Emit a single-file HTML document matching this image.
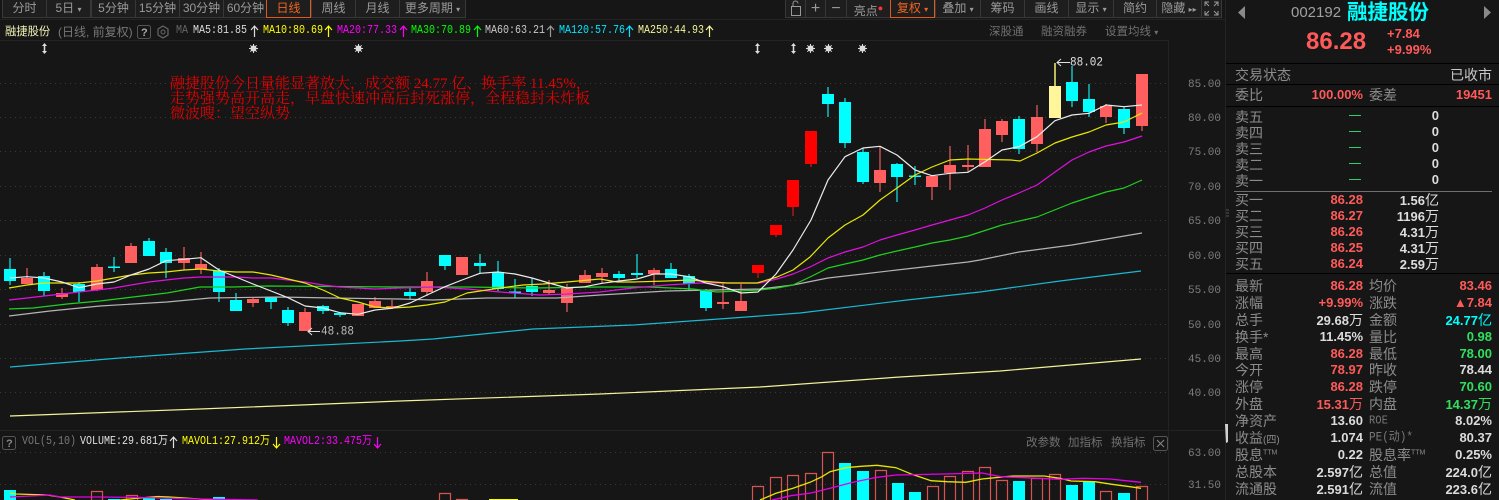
<!DOCTYPE html>
<html lang="zh"><head><meta charset="utf-8"><title>融捷股份</title>
<style>
html,body{margin:0;padding:0;background:#161616;}
#p{position:relative;width:1499px;height:500px;overflow:hidden;background:#161616;font-family:"Liberation Sans","Noto Sans CJK SC",sans-serif;font-size:12px;color:#999;}
.t{position:absolute;white-space:nowrap;line-height:16px;}
.m{font-family:"Liberation Mono","Noto Sans CJK SC",monospace;font-size:10px;transform:scaleY(1.15);}
.g{color:#8a8a8a}
.l{font-size:14px;color:#8c8c8c;left:1235px;}
.l2{font-size:14px;color:#8c8c8c;left:1369px;}
.v{font-size:13px;font-weight:bold;right:136px;}
.w{font-size:13px;font-weight:bold;right:7px;}
.q{font-size:13px;font-weight:bold;right:60px;color:#ddd;}
.r{color:#ff5a5a}.n{color:#2fe05f}.c{color:#00ffff}.h{color:#dcdcdc}
.b{position:absolute;top:0;height:17px;line-height:17px;text-align:center;background:#1e1e1e;border:1px solid #383838;border-top:0;box-sizing:content-box;color:#9a9a9a;font-size:12px;}
.ax{font-family:"Liberation Mono",monospace;font-size:11px;color:#7d7d7d;left:1188px;}
svg{position:absolute;left:0;top:0}
</style></head><body><div id="p">

<svg width="1499" height="500" viewBox="0 0 1499 500" fill="none">
<!-- frames -->
<path d="M0 40.5H1168M0 430.5H1225M1168.5 40V500M1225.5 0V500" stroke="#232323"/>
<path d="M0 19.5H1225" stroke="#232323"/>
<path d="M1226 63.5H1499M1226 84.5H1499M1226 106.5H1499M1226 273.5H1499" stroke="#000"/>
<path d="M1234 191.5H1492" stroke="#6e6e6e"/>
<!-- grid -->
<path d="M0 83.5H1168M0 117.5H1168M0 151.5H1168M0 186.5H1168M0 220.5H1168M0 255.5H1168M0 289.5H1168M0 324.5H1168M0 358.5H1168M0 392.5H1168M0 452.5H1168M0 484.5H1168" stroke="#383838" stroke-dasharray="1 4"/>

<!-- volume bars -->
<g stroke="#d9534f" stroke-width="1.2">
<path d="M91.5 491.5h11v9h-11zM126.5 495.5h11v6h-11zM439.5 493.5h11v8h-11zM456.5 499.5h11v2h-11zM752.5 486.5h11v15h-11zM770.5 477.5h11v24h-11zM787.5 475.5h11v26h-11zM805.5 473.5h11v28h-11zM822.5 452.5h11v49h-11zM875.5 470.5h11v31h-11zM927.5 486.5h11v15h-11zM944.5 476.5h11v25h-11zM962.5 471.5h11v30h-11zM979.5 467.5h11v34h-11zM996.5 480.5h11v21h-11zM1031.5 478.5h11v23h-11zM1049.5 474.5h11v27h-11zM1100.5 491.5h11v10h-11zM1136.5 486.5h11v15h-11z"/>
</g>
<path d="M4 490h12v10H4zM108 499h12v1h-12zM143 498h12v2h-12zM160 499h12v1h-12zM213 497h12v3h-12zM839 463h12v37h-12zM857 471h12v29h-12zM892 483h12v17h-12zM909 492h12v8h-12zM1013 481h12v19h-12zM1066 485h12v15h-12zM1083 482h12v18h-12zM1118 493h12v7h-12z" fill="#00ffff"/>
<path d="M489 499h29v1h-29z" fill="#ffff00"/>
<g stroke-width="1.3">
<polyline stroke="#e6e600" points="10,493 16,494 47,495 60,497 75,500"/>
<polyline stroke="#e6e600" points="120,500 140,498 158,496.5 170,497 192,498.5 215,500"/>
<polyline stroke="#e6e600" points="760,500 776,493.3 793,488.3 810,482.3 822,476.7 830,471.7 846,467.7 861,466.3 877,465.3 896,467.7 912,474.3 931,480.7 947,481.7 966,482.3 982,479 999,477.3 1013,476 1044,476 1060,478.3 1071,481 1095,481.7 1112,484.3 1130,486.7 1141,488.3"/>
<polyline stroke="#e600e6" points="10,497 50,495 60,497 100,497 140,497.5 200,499 258,500"/>
<polyline stroke="#e600e6" points="772,500 791,495.7 811,493 830,488.3 853,482.3 877,477.3 896,475 943,474 982,473 1001,476.7 1025,477.7 1060,479.3 1083,478.3 1110,479 1141,482.3"/>
</g>

<!-- candles wicks -->
<g stroke-width="1.6" stroke-linecap="butt">
<path stroke="#14b4b4" d="M10 258V285M44 272V296M79 282V302M114 257V272M149 238V256M166 248V278M219 268V302M236 293V311M271 297V309M288 307V326M323 305V314M340 312V317M410 287V300M445 255V270M480 254V273M498 261V291M515 279V298M532 278V296M619 271V282M637 254V278M671 263V278M689 274V290M706 289V311M828 87V117M845 98V148M863 148V184M897 163V202M915 166V185M1019 116V154M1072 66V107M1089 84V117M1124 107V134"/>
<path stroke="#b84c4c" d="M27 268V284M62 288V299M97 264V291M131 243V263M184 247V270M201 252V274M253 297V307M305 308V331M375 297V308M392 300V309M427 272V296M549 280V294M567 284V312M585 270V283M602 268V283M654 268V285M723 282V309M741 284V311M880 147V192M932 175V200M950 146V190M968 145V172M985 119V167M1002 119V142M1037 105V152M1106 104V123M1142 74V131"/>
<path stroke="#a81818" d="M758 273V278M776 235V237M793 207V216M811 164V167"/>
<path stroke="#e8e070" d="M1055 63V86"/>
</g>
<!-- candle bodies -->
<path fill="#00ffff" d="M4 269h12v12H4zM38 276h12v15H38zM73 284h12v8H73zM108 266.500h12v1.500h-12zM143 241h12v15h-12zM160 252h12v11h-12zM213 271h12v21h-12zM230 300h12v11h-12zM265 297h12v5h-12zM282 310h12v13h-12zM317 306h12v5h-12zM334 313h12v2h-12zM404 292h12v4h-12zM439 255h12v11h-12zM474 263h12v3h-12zM492 272h12v17h-12zM509 291.500h12v1.500h-12zM526 286h12v6h-12zM613 274h12v4h-12zM631 273h12v2h-12zM665 269h12v9h-12zM683 276h12v8h-12zM700 291h12v17h-12zM822 94h12v10h-12zM839 102h12v41h-12zM857 152h12v30h-12zM891 164h12v13h-12zM909 175.500h12v1.500h-12zM1013 119h12v30h-12zM1066 82h12v19h-12zM1083 99h12v13h-12zM1118 109h12v19h-12z"/>
<path fill="#ff5f5f" d="M21 278h12v6H21zM56 293h12v4H56zM91 267h12v23H91zM125 246h12v17h-12zM178 258h12v5h-12zM195 264h12v5h-12zM247 299h12v4h-12zM299 312h12v19h-12zM352 304h12v12h-12zM369 301h12v7h-12zM386 306h12v2h-12zM421 281h12v11h-12zM456 257h12v18h-12zM543 290h12v3h-12zM561 288h12v15h-12zM579 275h12v8h-12zM596 273h12v4h-12zM648 270h12v4h-12zM717 302h12v2h-12zM735 301h12v10h-12zM874 170h12v13h-12zM926 176h12v11h-12zM944 165h12v8h-12zM962 165h12v2h-12zM979 129h12v38h-12zM996 121h12v14h-12zM1031 117h12v27h-12zM1100 106h12v11h-12zM1136 74h12v52h-12z"/>
<path fill="#ff0000" d="M752 265h12v8h-12zM770 225h12v10h-12zM787 180h12v27h-12zM805 131h12v33h-12z"/>
<path fill="#fff59a" d="M1049 86h12v32h-12z"/>

<!-- MA lines -->
<g stroke-width="1.2" stroke-linejoin="round">
<polyline stroke="#f3f39a" points="10,416 200,409 400,401 600,394 760,387 900,377 1000,371 1141,359"/>
<polyline stroke="#19b9d2" points="10,367 120,358 245,349 400,341 433,339 533,329 633,325 733,318 800,313 907,300 980,292 1060,281 1141,271"/>
<polyline stroke="#b4b4b4" points="9,316 50,311 100,306 167,302 210,298 277,297 333,298 400,299 433,300 487,298 557,298 600,295 667,291 713,290 760,289 777,287 793,285 828,278 863,274 897,270 932,266 968,262 980,260 1019,252 1072,245 1142,233"/>
<polyline stroke="#1fd01f" points="9,309 33,308 67,304 100,301 133,297 167,293 200,287 233,287 267,286 400,287 467,287 533,288 600,287 650,287 693,289 717,292 760,290 777,288 793,285 810,277 828,268 845,264 863,260 880,255 897,251 915,247 932,243 950,240 968,236 1002,225 1037,217 1072,203 1106,192 1124,188 1142,180"/>
<polyline stroke="#e010e0" points="9,300 27,298 44,296 62,294 79,292 97,290 114,288 131,285 149,282 166,280 184,278 201,277 219,277 236,277 253,278 271,278 288,280 305,282 323,285 340,287 358,288 375,289 400,288 433,287 467,289 500,292 540,295 567,294 600,292 633,288 667,285 700,283 733,283 760,283 777,279 793,274 810,267 828,258 845,252 863,247 880,240 897,235 915,230 932,225 950,220 968,215 985,208 1002,200 1019,193 1037,185 1055,172 1072,160 1089,152 1106,146 1124,142 1142,136"/>
<polyline stroke="#e8e800" points="9,288 27,285 44,283 79,283 97,281 114,278 131,275 149,273 166,272 184,270 201,269 219,271 236,272 253,272 271,275 288,279 305,283 323,290 340,298 358,302 375,307 392,308 410,307 427,305 445,302 467,293 500,288 523,285 543,284 567,282 600,279 617,282 633,282 667,281 690,280 713,282 727,283 757,283 777,277 793,270 810,257 828,238 845,225 863,215 880,200 897,188 915,175 932,167 950,160 968,159 1011,160 1020,161 1037,153 1055,143 1072,137 1089,132 1106,125 1124,122 1142,113"/>
<polyline stroke="#ececec" points="10,278 27,276.7 44,278 62,282 79,287.7 97,284 114,282 131,275 149,269 166,260.7 184,259.3 201,257.7 219,270 236,277 253,284 271,291 288,297.7 305,306 323,308 340,312.7 358,314.3 375,310 392,308.3 410,303 427,295 445,286.7 462,280 480,273.3 498,272 515,274 532,278 549,283 567,288 585,286.7 602,283.3 619,281 637,279 654,274 671,274 689,276.7 706,283 723,286.7 741,293 758,292 776,274 793,250 811,220 828,180 845,156.7 863,148 880,146.3 897,155 915,170 932,175.7 950,173.3 968,172.3 985,161.7 1002,150 1019,146.7 1037,136.7 1055,120.7 1072,115 1089,113.3 1106,105 1124,106.7 1142,105"/>
</g>

<!-- marks -->
<g stroke="#dcdcdc" stroke-width="1.5" fill="#dcdcdc">
<path d="M44.500 44V53M757.500 44V53M793.500 44V53"/>
<path fill="#dcdcdc" stroke="none" d="M44.500 43l2.500 3h-5zM44.500 54l2.500-3h-5zM757.500 43l2.500 3h-5zM757.500 54l2.500-3h-5zM793.500 43l2.500 3h-5zM793.500 54l2.500-3h-5z"/>
<g stroke-width="1"><circle cx="253.500" cy="48.500" r="2.500"/><path d="M253.500 44v9M249 48.500h9M250.300 45.300l6.400 6.400M256.700 45.300l-6.400 6.400"/>
<circle cx="358.500" cy="48.500" r="2.500"/><path d="M358.500 44v9M354 48.500h9M355.300 45.300l6.400 6.400M361.700 45.300l-6.400 6.400"/>
<circle cx="810.500" cy="48.500" r="2.500"/><path d="M810.500 44v9M806 48.500h9M807.300 45.300l6.400 6.400M813.700 45.300l-6.400 6.400"/>
<circle cx="828.500" cy="48.500" r="2.500"/><path d="M828.500 44v9M824 48.500h9M825.300 45.300l6.400 6.400M831.700 45.300l-6.400 6.400"/>
<circle cx="862.500" cy="48.500" r="2.500"/><path d="M862.500 44v9M858 48.500h9M859.300 45.300l6.400 6.400M865.700 45.300l-6.400 6.400"/></g>
</g>
<!-- high/low arrows -->
<path d="M1070 62.500H1057M1061 59l-4 3.500 4 3.500M320 331.500H308M312 328l-4 3.500 4 3.500" stroke="#e0e0e0"/>

<!-- MA arrows -->
<g stroke-width="1.2">
<path stroke="#dcdcdc" d="M254.500 37V26M251 30l3.500-4 3.500 4"/>
<path stroke="#ffff00" d="M328.500 37V26M325 30l3.500-4 3.500 4"/>
<path stroke="#ff00ff" d="M403.500 37V26M400 30l3.500-4 3.500 4"/>
<path stroke="#00ff00" d="M477.500 37V26M474 30l3.500-4 3.500 4"/>
<path stroke="#9a9a9a" d="M550.500 37V26M547 30l3.500-4 3.500 4"/>
<path stroke="#00e5ff" d="M629.500 37V26M626 30l3.500-4 3.500 4"/>
<path stroke="#f3f39a" d="M709.500 37V26M706 30l3.500-4 3.500 4"/>
<path stroke="#e0e0e0" d="M173.500 448V437M170 441l3.500-4 3.500 4"/>
<path stroke="#ffff00" d="M276.500 437V448M273 444l3.500 4 3.500-4"/>
<path stroke="#ff00ff" d="M377.500 437V448M374 444l3.500 4 3.500-4"/>
</g>
<!-- help boxes, gear, close -->
<rect x="137.500" y="25.500" width="13" height="13" rx="2" stroke="#555"/>
<rect x="2.500" y="436.500" width="13" height="13" rx="2" stroke="#555"/>
<rect x="1153.500" y="436.500" width="14" height="14" rx="2" stroke="#555"/>
<path d="M1157 440l7 7M1164 440l-7 7" stroke="#888"/>
<path d="M163 26l5 3v6l-5 3-5-3v-6z" stroke="#666" stroke-width="1.2"/><circle cx="163" cy="32" r="2" stroke="#666"/>

<!-- right panel triangles -->
<path d="M1245 6v13l-7-6.500z" fill="#8a8a8a"/><path d="M1484 6v13l7-6.500z" fill="#8a8a8a"/>
<!-- order dashes -->
<path d="M1349 115.500h12M1349 131.500h12M1349 147.500h12M1349 163.500h12M1349 179.500h12" stroke="#2fd060"/>
<!-- splitter -->
<path d="M1225 424h3v18l-2 1z" fill="#d0d0d0"/>
<path d="M1226 210h3M1226 213h3M1226 216h3" stroke="#555"/>
</svg>

<!-- top toolbar left -->
<div class="b" style="left:2px;width:43px">分时</div>
<div class="b" style="left:46px;width:43px">5日 <span style="font-size:8px">▾</span></div>
<div class="b" style="left:91px;width:43px">5分钟</div>
<div class="b" style="left:135px;width:43px">15分钟</div>
<div class="b" style="left:179px;width:43px">30分钟</div>
<div class="b" style="left:223px;width:43px">60分钟</div>
<div class="b" style="left:266px;width:43px;border:1px solid #e2591b;border-top:0;color:#f0641e">日线</div>
<div class="b" style="left:311px;width:43px">周线</div>
<div class="b" style="left:355px;width:43px">月线</div>
<div class="b" style="left:399px;width:65px">更多周期 <span style="font-size:8px">▾</span></div>

<!-- top toolbar right -->
<div class="b" style="left:785px;width:19px"><svg width="19" height="17" style="position:static;display:block" fill="none"><rect x="5.500" y="6.500" width="9" height="9" stroke="#999"/><path d="M7 6V3.500a2.500 2.500 0 0 1 5 0" stroke="#999"/></svg></div>
<div class="b" style="left:805px;width:19px;font-size:16px">+</div>
<div class="b" style="left:825px;width:20px;font-size:16px">−</div>
<div class="b" style="left:846px;width:43px">亮点<span style="color:#f33;font-size:9px;vertical-align:4px">●</span></div>
<div class="b" style="left:890px;width:43px;border:1px solid #e2591b;border-top:0;color:#f0641e">复权 <span style="font-size:8px">▾</span></div>
<div class="b" style="left:935px;width:44px">叠加 <span style="font-size:8px">▾</span></div>
<div class="b" style="left:980px;width:43px">筹码</div>
<div class="b" style="left:1024px;width:43px">画线</div>
<div class="b" style="left:1068px;width:44px">显示 <span style="font-size:8px">▾</span></div>
<div class="b" style="left:1113px;width:42px">简约</div>
<div class="b" style="left:1156px;width:44px">隐藏 <span style="font-size:8px">▸▸</span></div>
<div class="b" style="left:1201px;width:19px"><svg width="19" height="17" style="position:static;display:block" fill="none"><path d="M3 6V2h4M16 6V2h-4M3 11v4h4M16 11v4h-4M3 2l4 4M16 2l-4 4M3 15l4-4M16 15l-4-4" stroke="#999"/></svg></div>

<!-- MA header -->
<div class="t" style="left:5px;top:24px;color:#f2f2b8;font-size:11.300px">融捷股份</div>
<div class="t" style="left:58px;top:24px;color:#777;font-size:12px">(日线, 前复权)</div>
<div class="t g" style="left:141px;top:25px;font-size:11px;font-weight:bold;color:#aaa">?</div>
<div class="t m" style="left:176px;top:24px;color:#666">MA</div>
<div class="t m" style="left:193px;top:24px;color:#dcdcdc">MA5:81.85</div>
<div class="t m" style="left:263px;top:24px;color:#ffff00">MA10:80.69</div>
<div class="t m" style="left:337px;top:24px;color:#ff00ff">MA20:77.33</div>
<div class="t m" style="left:411px;top:24px;color:#00ff00">MA30:70.89</div>
<div class="t m" style="left:485px;top:24px;color:#c8c8c8">MA60:63.21</div>
<div class="t m" style="left:559px;top:24px;color:#00e5ff">MA120:57.76</div>
<div class="t m" style="left:638px;top:24px;color:#f3f39a">MA250:44.93</div>
<div class="t" style="left:989px;top:24px;color:#707070;font-size:11.500px">深股通</div>
<div class="t" style="left:1041px;top:24px;color:#707070;font-size:11.500px">融资融券</div>
<div class="t" style="left:1105px;top:24px;color:#707070;font-size:11.500px">设置均线 <span style="font-size:8px">▾</span></div>

<!-- red note -->
<div class="t" style="left:170px;top:77px;color:#e60000;font-size:15px;line-height:15px;font-family:'Liberation Serif','Noto Serif CJK SC',serif;">融捷股份今日量能显著放大，成交额 24.77 亿、换手率 11.45%，<br>走势强势高开高走，早盘快速冲高后封死涨停，全程稳封未炸板<br>微波嗖：望空纵势</div>

<div class="t m" style="left:1070px;top:55px;color:#e0e0e0;font-size:11px">88.02</div>
<div class="t m" style="left:321px;top:324px;color:#bcbcbc;font-size:11px">48.88</div>

<!-- axis -->
<div class="t ax" style="top:77px">85.00</div>
<div class="t ax" style="top:111px">80.00</div>
<div class="t ax" style="top:145px">75.00</div>
<div class="t ax" style="top:180px">70.00</div>
<div class="t ax" style="top:214px">65.00</div>
<div class="t ax" style="top:249px">60.00</div>
<div class="t ax" style="top:283px">55.00</div>
<div class="t ax" style="top:318px">50.00</div>
<div class="t ax" style="top:352px">45.00</div>
<div class="t ax" style="top:386px">40.00</div>
<div class="t ax" style="top:446px">63.00</div>
<div class="t ax" style="top:478px">31.50</div>

<!-- volume header -->
<div class="t" style="left:6px;top:436px;font-size:11px;font-weight:bold;color:#888">?</div>
<div class="t m" style="left:22px;top:435px;color:#777;font-size:10px">VOL(5,10)</div>
<div class="t m" style="left:80px;top:435px;color:#e0e0e0">VOLUME:29.681万</div>
<div class="t m" style="left:182px;top:435px;color:#ffff00">MAVOL1:27.912万</div>
<div class="t m" style="left:284px;top:435px;color:#ff00ff">MAVOL2:33.475万</div>
<div class="t" style="left:1026px;top:435px;color:#707070;font-size:11.500px">改参数</div>
<div class="t" style="left:1068px;top:435px;color:#707070;font-size:11.500px">加指标</div>
<div class="t" style="left:1111px;top:435px;color:#707070;font-size:11.500px">换指标</div>

<!-- right header -->
<div class="t" style="left:1291px;top:4px;font-size:15px;line-height:18px;color:#a0a0a0">002192</div>
<div class="t c" style="left:1347px;top:0;font-size:20.500px;line-height:25px;font-weight:bold">融捷股份</div>
<div class="t" style="left:1306px;top:28px;font-size:24px;line-height:28px;font-weight:bold;color:#ff5a5a">86.28</div>
<div class="t r" style="left:1387px;top:26px;font-size:13px;font-weight:bold">+7.84</div>
<div class="t r" style="left:1387px;top:42px;font-size:13px;font-weight:bold">+9.99%</div>

<div class="t l" style="top:67px">交易状态</div>
<div class="t" style="right:7px;top:67px;font-size:14px;color:#c8c8c8">已收市</div>
<div class="t l" style="top:87px">委比</div>
<div class="t r" style="right:136px;top:87px;font-size:13px;font-weight:bold">100.00%</div>
<div class="t l2" style="top:87px">委差</div>
<div class="t r w" style="top:87px">19451</div>

<div class="t l" style="top:109px">卖五</div><div class="t q" style="top:108px">0</div>
<div class="t l" style="top:125px">卖四</div><div class="t q" style="top:124px">0</div>
<div class="t l" style="top:141px">卖三</div><div class="t q" style="top:140px">0</div>
<div class="t l" style="top:157px">卖二</div><div class="t q" style="top:156px">0</div>
<div class="t l" style="top:173px">卖一</div><div class="t q" style="top:172px">0</div>

<div class="t l" style="top:192px">买一</div><div class="t v r" style="top:192px">86.28</div><div class="t q" style="top:192px">1.56<span style="font-weight:normal;font-size:14px">亿</span></div>
<div class="t l" style="top:208px">买二</div><div class="t v r" style="top:208px">86.27</div><div class="t q" style="top:208px">1196<span style="font-weight:normal;font-size:14px">万</span></div>
<div class="t l" style="top:224px">买三</div><div class="t v r" style="top:224px">86.26</div><div class="t q" style="top:224px">4.31<span style="font-weight:normal;font-size:14px">万</span></div>
<div class="t l" style="top:240px">买四</div><div class="t v r" style="top:240px">86.25</div><div class="t q" style="top:240px">4.31<span style="font-weight:normal;font-size:14px">万</span></div>
<div class="t l" style="top:256px">买五</div><div class="t v r" style="top:256px">86.24</div><div class="t q" style="top:256px">2.59<span style="font-weight:normal;font-size:14px">万</span></div>

<div class="t l" style="top:278px">最新</div><div class="t v r" style="top:278px">86.28</div><div class="t l2" style="top:278px">均价</div><div class="t w r" style="top:278px">83.46</div>
<div class="t l" style="top:295px">涨幅</div><div class="t v r" style="top:295px">+9.99%</div><div class="t l2" style="top:295px">涨跌</div><div class="t w r" style="top:295px">▲7.84</div>
<div class="t l" style="top:312px">总手</div><div class="t v h" style="top:312px">29.68<span style="font-weight:normal;font-size:14px">万</span></div><div class="t l2" style="top:312px">金额</div><div class="t w c" style="top:312px">24.77<span style="font-weight:normal;font-size:14px">亿</span></div>
<div class="t l" style="top:329px">换手*</div><div class="t v h" style="top:329px">11.45%</div><div class="t l2" style="top:329px">量比</div><div class="t w n" style="top:329px">0.98</div>
<div class="t l" style="top:346px">最高</div><div class="t v r" style="top:346px">86.28</div><div class="t l2" style="top:346px">最低</div><div class="t w n" style="top:346px">78.00</div>
<div class="t l" style="top:362px">今开</div><div class="t v r" style="top:362px">78.97</div><div class="t l2" style="top:362px">昨收</div><div class="t w h" style="top:362px">78.44</div>
<div class="t l" style="top:379px">涨停</div><div class="t v r" style="top:379px">86.28</div><div class="t l2" style="top:379px">跌停</div><div class="t w n" style="top:379px">70.60</div>
<div class="t l" style="top:396px">外盘</div><div class="t v r" style="top:396px">15.31<span style="font-weight:normal;font-size:14px">万</span></div><div class="t l2" style="top:396px">内盘</div><div class="t w n" style="top:396px">14.37<span style="font-weight:normal;font-size:14px">万</span></div>
<div class="t l" style="top:413px">净资产</div><div class="t v h" style="top:413px">13.60</div><div class="t m" style="left:1369px;top:413px;color:#777;font-size:10.500px">ROE</div><div class="t w h" style="top:413px">8.02%</div>
<div class="t l" style="top:430px">收益<span style="font-size:10px">(四)</span></div><div class="t v h" style="top:430px">1.074</div><div class="t m" style="left:1369px;top:430px;color:#777;font-size:11px">PE(动)*</div><div class="t w h" style="top:430px">80.37</div>
<div class="t l" style="top:447px">股息<sup style="font-size:7px;line-height:0">TTM</sup></div><div class="t v h" style="top:447px">0.22</div><div class="t l2" style="top:447px">股息率<sup style="font-size:7px;line-height:0">TTM</sup></div><div class="t w h" style="top:447px">0.25%</div>
<div class="t l" style="top:464px">总股本</div><div class="t v h" style="top:464px">2.597<span style="font-weight:normal;font-size:14px">亿</span></div><div class="t l2" style="top:464px">总值</div><div class="t w h" style="top:464px">224.0<span style="font-weight:normal;font-size:14px">亿</span></div>
<div class="t l" style="top:481px">流通股</div><div class="t v h" style="top:481px">2.591<span style="font-weight:normal;font-size:14px">亿</span></div><div class="t l2" style="top:481px">流值</div><div class="t w h" style="top:481px">223.6<span style="font-weight:normal;font-size:14px">亿</span></div>

</div></body></html>
